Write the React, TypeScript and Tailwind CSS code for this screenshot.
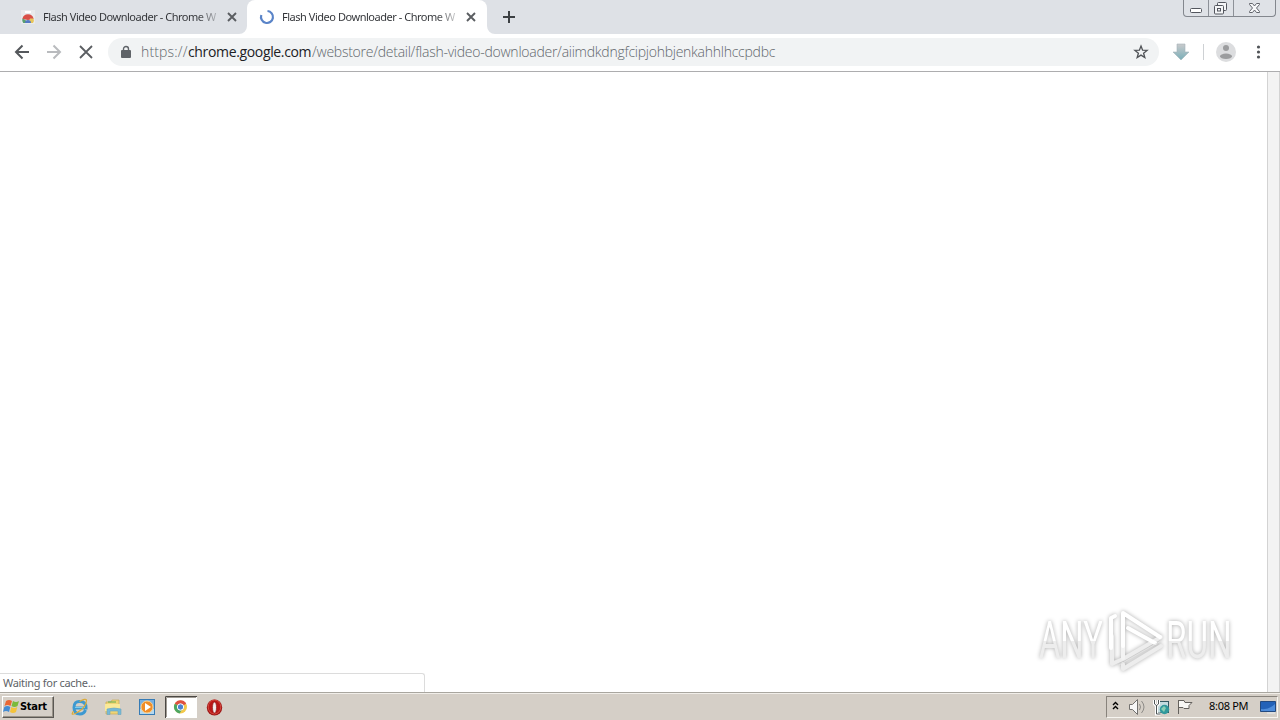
import React from "react";

const TITLE = "Flash Video Downloader - Chrome W";

function Close({ className }: { className: string }) {
  return (
    <svg viewBox="0 0 10 10" className={className} fill="none" stroke="currentColor" strokeWidth="1.9">
      <path d="M1 1l8 8M9 1l-8 8" />
    </svg>
  );
}

function TabTitle() {
  return (
    <span className="w-[175px] shrink-0 whitespace-nowrap bg-gradient-to-r from-[#303236] from-88% to-[#303236]/20 bg-clip-text font-['Noto_Sans',sans-serif] text-[11px] leading-[16px] tracking-[-0.47px] text-transparent">
      {TITLE}
    </span>
  );
}

function StoreIcon() {
  return (
    <svg width="16" height="16" viewBox="0 0 16 16" className="shrink-0">
      <path d="M1 1h14v13a1 1 0 0 1-1 1H2a1 1 0 0 1-1-1z" fill="#e9eaec" />
      <path d="M5 3h6" stroke="#fff" strokeWidth="2" />
      <path d="M2.4 10A5.700 5.700 0 0 1 13.600 10L8 11z" fill="#d95048" />
      <path d="M2.400 9.500Q1.800 12 3.200 14H7L5.500 11z" fill="#5a9f70" />
      <path d="M13.400 9.600Q14.600 12 13 14H9l1-4.400z" fill="#e8c65c" />
      <path d="M5 14a3 3 0 0 1 6 0z" fill="#5478c4" />
    </svg>
  );
}

function TabStrip() {
  return (
    <div className="relative flex h-[34px] bg-[#dee1e6]">
      <div className="flex h-[34px] w-[247px] items-center pl-5">
        <StoreIcon />
        <span className="w-[7px]" />
        <TabTitle />
        <Close className="ml-[9px] h-[10px] w-[10px] text-[#5a5d61]" />
      </div>
      <div className="flex h-[34px] w-[240px] items-center rounded-t-lg bg-white pl-3">
        <svg width="16" height="16" viewBox="0 0 16 16" className="shrink-0" fill="none">
          <path d="M8.500 2A6 6 0 1 1 2.300 6" stroke="#5a84c8" strokeWidth="2.200" />
        </svg>
        <span className="w-[7px]" />
        <TabTitle />
        <Close className="ml-[9px] h-[10px] w-[10px] text-[#5a5d61]" />
      </div>
      <svg width="8" height="8" viewBox="0 0 8 8" className="absolute bottom-0 left-[239px]"><path d="M8 0v8H0a8 8 0 0 0 8-8z" fill="#fff" /></svg>
      <svg width="8" height="8" viewBox="0 0 8 8" className="absolute bottom-0 left-[487px]"><path d="M0 0v8h8a8 8 0 0 1-8-8z" fill="#fff" /></svg>
      <div className="flex w-11 items-center justify-center">
        <svg width="12" height="12" viewBox="0 0 12 12"><path d="M6 0v12M0 6h12" stroke="#3c4043" strokeWidth="2" /></svg>
      </div>
      <div className="absolute right-[4px] top-0 flex h-[17px] w-[93px] rounded-b-[4px] border border-t-0 border-[#83878e] bg-[#dfe2e7]">
        <div className="w-[25px] border-r border-[#8d9198]">
          <svg width="24" height="16" viewBox="0 0 24 16"><rect x="6.500" y="8.500" width="11" height="4" rx="1" fill="#fff" stroke="#53565e" /></svg>
        </div>
        <div className="w-[25px] border-r border-[#8d9198]">
          <svg width="24" height="16" viewBox="0 0 24 16" fill="#f4f5f7" stroke="#53565e">
            <rect x="8.500" y="2.500" width="9" height="8" rx="1" />
            <rect x="5.500" y="5.500" width="9" height="8.500" rx="1" />
            <rect x="8.500" y="8.500" width="3" height="2.500" />
          </svg>
        </div>
        <div className="flex-1">
          <svg width="41" height="16" viewBox="0 0 41 16"><path d="M15.500 3.500h3l2 2.500 2-2.500h3v1L22.500 8l3 3.500v1h-3l-2-2.500-2 2.500h-3v-1l3-3.500-3-3.500z" fill="#f7f8fa" stroke="#62656c" /></svg>
        </div>
      </div>
    </div>
  );
}

function Toolbar() {
  return (
    <div className="flex h-[38px] items-center border-b border-[#adadaf] bg-white pb-px">
      <svg width="108" height="36" viewBox="0 0 108 36" fill="none" strokeWidth="2" className="shrink-0">
        <path d="M29 18H16.500M22.500 11.500L16 18l6.500 6.500" stroke="#55585c" />
        <path d="M47 18h12.500M53.500 11.500L60 18l-6.500 6.500" stroke="#b9bbbe" />
        <path d="M80 12l12 12M92 12L80 24" stroke="#5b5e62" strokeWidth="1.800" />
      </svg>
      <div className="flex h-7 w-[1051px] shrink-0 items-center rounded-full bg-[#f1f3f4] pl-[13px]">
        <svg width="10" height="14" viewBox="0 0 10 14" className="shrink-0">
          <path d="M2.500 6V4a2.500 2.500 0 0 1 5 0v2" fill="none" stroke="#5f6368" strokeWidth="1.400" />
          <rect y="5" width="10" height="8" rx="1" fill="#5f6368" />
        </svg>
        <div className="ml-[10px] flex whitespace-nowrap font-['Open_Sans',sans-serif] text-[14px] font-light leading-5 text-[#62676c]">
          <span className="w-[47px] tracking-[0.15px]">https://</span>
          <span className="w-[124px] font-normal tracking-[-0.35px] text-[#202124]">chrome.google.com</span>
          <span className="tracking-[-0.255px]">/webstore/detail/flash-video-downloader/aiimdkdngfcipjohbjenkahhlhccpdbc</span>
        </div>
        <svg width="16" height="16" viewBox="0 0 24 24" className="ml-auto mr-[10px]" fill="none" stroke="#505357" strokeWidth="2">
          <path d="M12 3l2.400 6.300 6.700.3-5.200 4.200 1.800 6.500-5.700-3.700-5.700 3.700 1.800-6.500L2.900 9.600l6.700-.3z" />
        </svg>
      </div>
      <svg width="121" height="36" viewBox="0 0 121 36">
        <defs><linearGradient id="down" x1="0" x2="0" y1="0" y2="1"><stop stopColor="#c9cacc" /><stop offset="1" stopColor="#79aeb8" /></linearGradient></defs>
        <path d="M18 10h8v8h4l-8 8-8-8h4z" fill="url(#down)" stroke="#a4b3b8" strokeWidth=".6" />
        <path d="M44.500 10v16" stroke="#ced1d4" />
        <circle cx="67" cy="18" r="10" fill="#dcdddf" />
        <circle cx="67" cy="14" r="3" fill="#9b9c9e" />
        <ellipse cx="67" cy="22.300" rx="6" ry="2.700" fill="#9b9c9e" />
        <g fill="#505357"><circle cx="99.500" cy="13" r="1.600" /><circle cx="99.500" cy="18" r="1.600" /><circle cx="99.500" cy="23" r="1.600" /></g>
      </svg>
    </div>
  );
}

function Watermark() {
  return (
    <div className="absolute bottom-[16px] left-[1030px] flex h-[70px] w-[210px] items-center drop-shadow-[0_0_2px_#aaaaaa]">
      <div className="w-[72px] pl-[9px]">
        <span className="block w-[100px] origin-left scale-x-[0.63] bg-gradient-to-b from-white from-50% to-[#ededed] to-50% bg-clip-text font-['Roboto',sans-serif] text-[52px] font-normal leading-[62px] text-transparent">ANY</span>
      </div>
      <svg width="64" height="70" viewBox="72 0 64 70" fill="none" className="shrink-0">
        <g strokeLinejoin="round" strokeLinecap="round">
          <path d="M82 30v28l4-2M86 56l7-3 38-22M93 58v5l38-23" stroke="#ededed" strokeWidth="4" />
          <path d="M81 42V12l4-2" stroke="#fff" strokeWidth="4" />
          <path d="M93 30v22" stroke="#f3f3f3" strokeWidth="4" />
          <path d="M93 40V7l37 24M98 22l27 15" stroke="#fff" strokeWidth="4" />
          <path d="M89 59l42-24" stroke="#e3e3e3" strokeWidth="1" />
        </g>
      </svg>
      <div className="w-[74px]">
        <span className="block w-[104px] origin-left scale-x-[0.64] bg-gradient-to-b from-white from-50% to-[#ededed] to-50% bg-clip-text font-['Roboto',sans-serif] text-[52px] font-normal leading-[62px] text-transparent">RUN</span>
      </div>
    </div>
  );
}

function Page() {
  return (
    <div className="relative flex h-[620px] bg-white">
      <div className="flex-1" />
      <div className="w-[13px] border-l border-r border-[#d3d3d3] bg-[#f3f3f3]" />
      <div className="absolute bottom-0 left-0 flex h-[19px] w-[425px] items-center rounded-tr-[3px] border-r border-t border-[#dcdcdc] bg-white pl-[3px] font-['Noto_Sans',sans-serif] text-[11px] text-[#606367]">
        <span className="tracking-[-0.3px]">Waiting for cache...</span>
      </div>
      <Watermark />
    </div>
  );
}

function WindowsFlag() {
  return (
    <svg width="17" height="16" viewBox="0 0 17 16" className="shrink-0">
      <path d="M3 2q3-2 6 0L7.500 7q-3-2-6 0z" fill="#e96734" />
      <path d="M10 2q3 2 6 0l-1.500 5q-3 2-6 0z" fill="#7bba3c" />
      <path d="M1.300 8q3-2 6 0L6 13q-3-2-6 0z" fill="#438bd3" />
      <path d="M8.300 8q3 2 6 0L13 13q-3 2-6 0z" fill="#f4c33b" />
    </svg>
  );
}

function Taskbar() {
  return (
    <div className="flex h-7 items-center border-t border-[#a9a69f] bg-[#d5cfc7] shadow-[inset_0_1px_0_#f1eee9]">
      <div className="ml-[2px] flex h-[22px] w-[52px] items-center border border-b-[#5b5853] border-l-white border-r-[#5b5853] border-t-white bg-[#d5cfc7] shadow-[inset_-1px_-1px_0_#999389]">
        <WindowsFlag />
        <span className="font-['DejaVu_Sans',sans-serif] text-[11px] font-bold leading-4 tracking-[-0.3px] text-black [font-stretch:condensed]">Start</span>
      </div>
      <svg width="180" height="26" viewBox="54 0 180 26">
        <g fill="none" stroke="#3d99d1">
          <path d="M85.500 16q-1.500 4-5.500 4-6 0-6-6.500t6-6q6 0 6 6.500H75" strokeWidth="3" />
          <path d="M75 13.500h10" stroke="#78cef2" strokeWidth="1" />
          <path d="M73.500 17Q69.500 23 78 18T86.500 6q-1-2-7 1.500" stroke="#dcaa35" strokeWidth="1.200" />
        </g>
        <path d="M106 8h5l1-2h7v14h-13z" fill="#f0d575" stroke="#c8aa57" strokeWidth=".7" />
        <path d="M105 10h15v7h-15z" fill="#fae998" />
        <path d="M107 20.500V15q7-2 14 0v5.500h-3V17h-8v3.500z" fill="#75b9d8" stroke="#6ba4bd" strokeWidth=".6" />
        <path d="M108 8h8" stroke="#64af4d" />
        <rect x="139.500" y="5.500" width="15" height="15" fill="#77afe1" stroke="#367bb5" />
        <path d="M140 15h14v5h-14z" fill="#b4d8f0" />
        <circle cx="147" cy="13" r="6" fill="#f08d28" stroke="#ffd18b" />
        <path d="M145 9l6 4-6 4z" fill="#fff" />
        <path d="M165 2h32v22h-32z" fill="#fff" />
        <path d="M165.500 24V2.500H197" fill="none" stroke="#4b4844" />
        <path d="M166.500 23V3.500H196" fill="none" stroke="#a09b94" />
        <circle cx="180.500" cy="13" r="6.500" fill="#f2c84c" />
        <path d="M180.500 13L174.800 9.700A6.500 6.500 0 0 1 186.200 9.700z" fill="#df5140" />
        <path d="M180.500 13l-5.700-3.300a6.500 6.500 0 0 0 4.800 9.700l3-5z" fill="#4ca661" />
        <circle cx="180.500" cy="13" r="3.200" fill="#4b82d0" stroke="#fff" />
        <ellipse cx="214.500" cy="13.500" rx="7.700" ry="8" fill="#9e1515" />
        <ellipse cx="214.500" cy="13" rx="6.300" ry="7" fill="#ba1717" stroke="#d54b40" />
        <ellipse cx="214.500" cy="13.500" rx="2" ry="5.500" fill="#f4eded" stroke="#801010" strokeWidth=".6" />
      </svg>
      <div className="ml-auto mr-[2px] flex h-[22px] w-[172px] items-center border border-b-[#f7f5f0] border-l-[#88837c] border-r-[#f7f5f0] border-t-[#88837c]">
        <svg width="102" height="20" viewBox="1107 697 102 20" className="shrink-0">
          <path d="M1113 705l2.500-2.500L1118 705M1113 709l2.500-2.500L1118 709" fill="none" stroke="#000" strokeWidth="1.400" />
          <path d="M1129.500 704.500h3l5-5v15l-5-5h-3z" fill="#f7f7f7" stroke="#72716f" />
          <path d="M1139.500 704q2 3 0 6M1141.500 701q5 6 0 12" fill="none" stroke="#8d8b87" />
          <rect x="1157.500" y="701.500" width="11" height="11" fill="#c4dcdf" stroke="#345961" />
          <path d="M1154.500 700v4q2 3 4 0v-4M1156.500 705v9h4" fill="none" stroke="#fff" strokeWidth="3" />
          <path d="M1154.500 700v4q2 3 4 0v-4M1156.500 705v9h4" fill="none" stroke="#4f5657" />
          <circle cx="1164.500" cy="709.500" r="4.700" fill="#31999c" />
          <path d="M1161 709l3-3 2 2-2 4z" fill="#8bcfb3" />
          <path d="M1178.500 700v14M1179 700.500h5l1 2h7l-3 3v3h-5l-1-1h-4" fill="#f8f7f4" stroke="#64615d" />
        </svg>
        <span className="w-[42px] whitespace-nowrap font-['Noto_Sans',sans-serif] text-[11px] tracking-[-0.3px] text-black">8:08 PM</span>
        <svg width="16" height="16" viewBox="0 0 16 16" className="ml-[9px] shrink-0">
          <path d="M.5 2.500h15v10H.5z" fill="#2362b8" stroke="#234a80" />
          <path d="M1 10q8 1 14-5v7H1z" fill="#4f8dda" />
          <path d="M7 14h8" stroke="#e7edf3" />
        </svg>
      </div>
    </div>
  );
}

export default function App() {
  return (
    <div className="flex h-[720px] w-[1280px] flex-col overflow-hidden bg-white">
      <TabStrip />
      <Toolbar />
      <Page />
      <Taskbar />
    </div>
  );
}
